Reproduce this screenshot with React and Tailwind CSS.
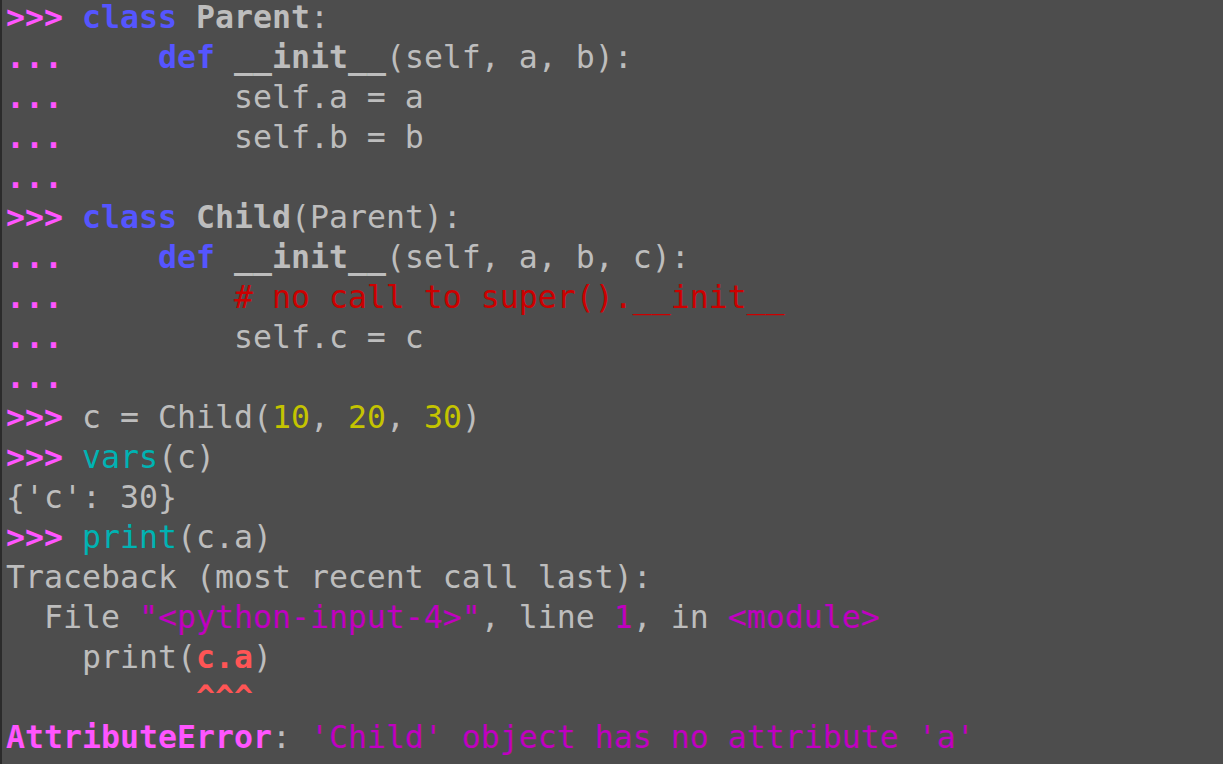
import React from "react";

// colour tokens for the REPL palette
const P = "text-[#ff55ff] font-bold"; // prompt
const KW = "text-[#5555ff] font-bold"; // keyword
const B = "font-bold"; // bold name
const NUM = "text-[#c4c400]";
const BI = "text-[#00b3b3]";
const STR = "text-[#c000c0]";
const CM = "text-[#cc0000]";
const ERR = "text-[#ff5555] font-bold";

const lines = [
  [[P, ">>>"], ["", " "], [KW, "class"], ["", " "], [B, "Parent"], ["", ":"]],
  [[P, "..."], ["", "     "], [KW, "def"], ["", " "], [B, "__init__"], ["", "(self, a, b):"]],
  [[P, "..."], ["", "         self.a = a"]],
  [[P, "..."], ["", "         self.b = b"]],
  [[P, "..."]],
  [[P, ">>>"], ["", " "], [KW, "class"], ["", " "], [B, "Child"], ["", "(Parent):"]],
  [[P, "..."], ["", "     "], [KW, "def"], ["", " "], [B, "__init__"], ["", "(self, a, b, c):"]],
  [[P, "..."], ["", "         "], [CM, "# no call to super().__init__"]],
  [[P, "..."], ["", "         self.c = c"]],
  [[P, "..."]],
  [[P, ">>>"], ["", " c = Child("], [NUM, "10"], ["", ", "], [NUM, "20"], ["", ", "], [NUM, "30"], ["", ")"]],
  [[P, ">>>"], ["", " "], [BI, "vars"], ["", "(c)"]],
  [["", "{'c': 30}"]],
  [[P, ">>>"], ["", " "], [BI, "print"], ["", "(c.a)"]],
  [["", "Traceback (most recent call last):"]],
  [["", "  File "], [STR, "\"<python-input-4>\""], ["", ", line "], [STR, "1"], ["", ", in "], [STR, "<module>"]],
  [["", "    print("], [ERR, "c.a"], ["", ")"]],
  [["", "          "], [ERR, "^^^"]],
  [[P, "AttributeError"], ["", ": "], [STR, "'Child' object has no attribute 'a'"]],
];

export default function App() {
  return (
    <div className="w-[1223px] h-[764px] overflow-hidden bg-[#4d4d4d] border-l-2 border-[#2b2b2b] flex">
      <div
        className="pl-[4px] -mt-[3px] text-[31.55px] leading-[40px] text-[#bdbdbd] whitespace-pre"
        style={{ fontFamily: '"DejaVu Sans Mono", monospace' }}
      >
        {lines.map((line, i) => (
          <div key={i} className="h-[40px]">
            {line.map(([cls, txt], j) => (
              <span key={j} className={cls}>
                {txt}
              </span>
            ))}
          </div>
        ))}
      </div>
    </div>
  );
}
